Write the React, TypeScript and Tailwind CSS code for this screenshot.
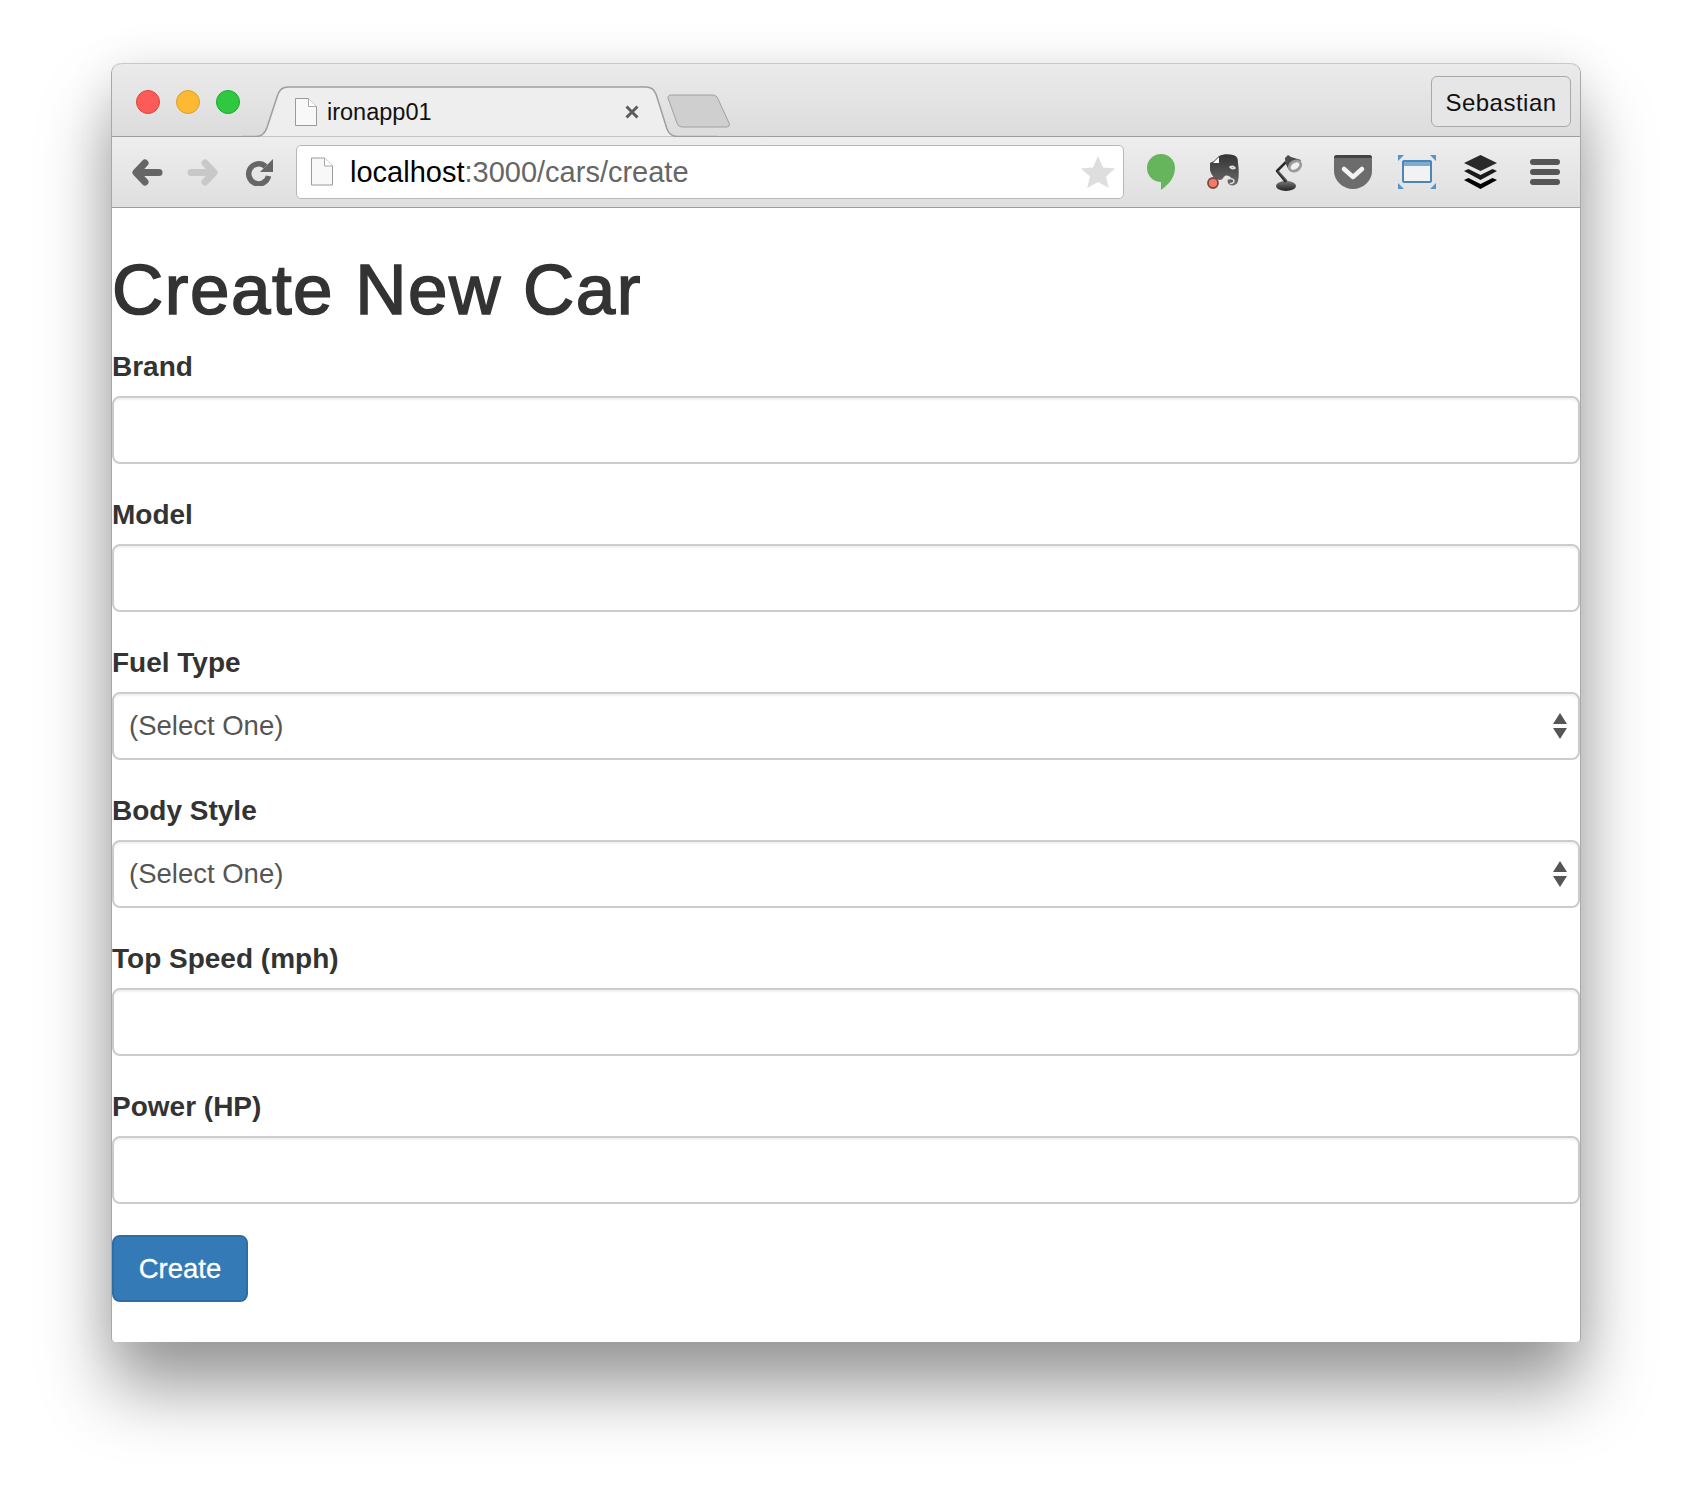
const sans = "font-['Liberation_Sans',Arial,sans-serif]";

function PageIcon({ className }: { className: string }) {
  return (
    <svg viewBox="0 0 22 28" className={className}>
      <path d="M.5.500h13l8 8v19H.5z" fill="#f8f8f8" stroke="#9a9a9a" />
      <path d="M13.500.500v8h8" fill="#fff" stroke="#a8a8a8" />
    </svg>
  );
}

function Arrow({ color, flip }: { color: string; flip?: boolean }) {
  return (
    <svg viewBox="0 0 31 27" className={`w-[31px] h-[27px] ${flip ? "-scale-x-100" : ""}`}>
      <path d="M13 4 4 13.500 13 23M5 13.500h22" fill="none" stroke={color} strokeWidth="7" strokeLinecap="round" strokeLinejoin="round" />
    </svg>
  );
}

function Hangouts() {
  return (
    <svg viewBox="0 0 28 36" className="w-[28px] h-[36px]">
      <path d="M14 0a14 14 0 0 1 14 14c0 10-7 17-14 22v-8A14 14 0 0 1 14 0z" fill="#66b45c" />
    </svg>
  );
}

function Evernote() {
  return (
    <svg viewBox="0 0 34 36" className="w-[34px] h-[36px] -ml-[4px]">
      <defs>
        <linearGradient id="ev" x1="0" y1="0" x2="0" y2="1">
          <stop offset="0" stopColor="#333" />
          <stop offset="1" stopColor="#6a6a6a" />
        </linearGradient>
      </defs>
      <path d="M8 7 13 2c4-2 10-2 14-1 4 1 5 3 5 8 1 7 1 13 0 18-1 5-8 6-10 2-1-3 0-5 3-5-1-2-4-3-6-2-2 1-2 4-5 4-5 0-9-5-10-10V9z" fill="url(#ev)" />
      <path d="M7 9 13 3v6z" fill="#fff" />
      <path d="M24 13c2-1 4-.500 5 1-2 1-4 .500-5-1zM22 25c3-1 6 0 6 2s-3 3-4 2" fill="none" stroke="#e0e0e0" strokeWidth="1.500" />
      <circle cx="7" cy="29" r="5" fill="#f4796a" stroke="#7a4a44" strokeWidth="1.800" />
    </svg>
  );
}

function Lamp() {
  return (
    <svg viewBox="0 0 28 37" className="w-[28px] h-[37px]">
      <defs>
        <linearGradient id="lb" x1="0" y1="0" x2="0" y2="1">
          <stop offset="0" stopColor="#777" />
          <stop offset="1" stopColor="#222" />
        </linearGradient>
      </defs>
      <ellipse cx="11" cy="32" rx="10" ry="5" fill="url(#lb)" />
      <path d="M11 28 2 17 11 8" fill="none" stroke="#2a2a2a" strokeWidth="2.500" strokeLinejoin="round" />
      <path d="M3 17 12 27" fill="none" stroke="#555" strokeWidth="1.500" />
      <path d="M10 4l3-3 3 2 10 3-9 12c-4-2-7-8-7-14z" fill="#4c4c4c" />
      <ellipse cx="20" cy="12" rx="7.500" ry="6" fill="#9a9a9a" transform="rotate(-35 20 12)" />
      <ellipse cx="20" cy="12" rx="5" ry="3" fill="#f0f0f0" transform="rotate(-35 20 12)" />
    </svg>
  );
}

function Pocket() {
  return (
    <svg viewBox="0 0 38 35" className="w-[38px] h-[35px]">
      <path d="M3 0h32a3 3 0 0 1 3 3v13c0 10-9 18-19 18S0 26 0 16V3a3 3 0 0 1 3-3z" fill="#6c6c6c" />
      <path d="M3 0h32a3 3 0 0 1 3 3H0a3 3 0 0 1 3-3z" fill="#444" />
      <path d="m10 14 9 8 9-8" fill="none" stroke="#f4f4f4" strokeWidth="4.500" strokeLinecap="round" strokeLinejoin="round" />
    </svg>
  );
}

function Screenshot() {
  return (
    <svg viewBox="0 0 38 34" className="w-[38px] h-[34px]">
      <path d="M0 0h6L0 6zM38 0h-6l6 6zM0 34h6l-6-6zM38 34h-6l6-6z" fill="#5b93c0" />
      <rect x="4" y="6" width="30" height="22" fill="#f2f2f2" />
      <rect x="4" y="6" width="30" height="5" fill="#7fabd0" />
      <rect x="5" y="6" width="28" height="21" rx="1" fill="none" stroke="#4a86b8" strokeWidth="2" />
    </svg>
  );
}

function Buffer() {
  return (
    <svg viewBox="0 0 33 34" className="w-[33px] h-[34px] -ml-[2px]">
      <path d="M16.500 0 33 8 16.500 16 0 8z" fill="#2a2a2a" />
      <path d="M0 16l4.500-2 12 6 12-6 4.500 2-16.500 9z" fill="#1a1a1a" />
      <path d="M0 25l4.500-2 12 6 12-6 4.500 2-16.500 9z" fill="#000" />
    </svg>
  );
}

function Hamburger() {
  return (
    <div className="w-[30px] flex flex-col gap-[4px]">
      <div className="h-[6px] rounded-[3px] bg-[#555]" />
      <div className="h-[6px] rounded-[3px] bg-[#555]" />
      <div className="h-[6px] rounded-[3px] bg-[#555]" />
    </div>
  );
}

function ExtSlot({ children }: { children: React.ReactNode }) {
  return <div className="w-[64px] flex justify-center">{children}</div>;
}

function Label({ children }: { children: string }) {
  return <label className="block h-[39px] mb-[10px] text-[28px] leading-[39px] font-bold text-[#333]">{children}</label>;
}

function TextField({ label }: { label: string }) {
  return (
    <div className="mb-[31px]">
      <Label>{label}</Label>
      <input type="text" className="block w-full h-[68px] rounded-[8px] border-2 border-[#ccc] bg-white shadow-[inset_0_2px_2px_rgba(0,0,0,0.06)]" />
    </div>
  );
}

function SelectField({ label }: { label: string }) {
  return (
    <div className="mb-[31px]">
      <Label>{label}</Label>
      <div className="flex items-center justify-between h-[68px] rounded-[8px] border-2 border-[#ccc] bg-white pl-[15px] pr-[11px] shadow-[inset_0_2px_2px_rgba(0,0,0,0.06)]">
        <span className="text-[27.500px] text-[#555]">(Select One)</span>
        <svg viewBox="0 0 14 26" className="w-[14px] h-[26px]">
          <path d="M7 0 14 11H0zM0 15h14L7 26z" fill="#555" />
        </svg>
      </div>
    </div>
  );
}

export default function App() {
  return (
    <div className={`min-h-[1502px] bg-white pt-[63px] px-[111px] ${sans}`}>
      <div className="w-[1470px] h-[1279px] rounded-t-[10px] rounded-b-[4px] bg-white flex flex-col shadow-[0_46px_70px_rgba(0,0,0,0.4),0_0_50px_rgba(0,0,0,0.07)] border-x border-[#a8a8a8]">
        {/* tab strip */}
        <div className="relative h-[74px] shrink-0 rounded-t-[10px] border-t border-[#c8c8c8] border-b border-b-[#9e9e9e] bg-gradient-to-b from-[#ebebeb] to-[#dcdcdc] flex justify-end items-start pt-[12px] pr-[9px]">
          <div className="absolute left-[24px] top-[26px] flex gap-[16px]">
            <span className="w-[24px] h-[24px] rounded-full bg-[#fc5b57] border border-[#e0443e]" />
            <span className="w-[24px] h-[24px] rounded-full bg-[#fdb834] border border-[#dea123]" />
            <span className="w-[24px] h-[24px] rounded-full bg-[#2fc840] border border-[#1aab29]" />
          </div>

          <svg viewBox="0 0 520 51" className="absolute left-[130px] top-[22px] w-[520px] h-[51px]" fill="none">
            <path d="M0 50.500h14c6 0 9-3 11-9L36 8c2-5 5-7 10-7h358c5 0 8 2 10 7l11 35c2 5 5 7.500 10 7.500h40" fill="#eeeeee" stroke="#9e9e9e" strokeWidth="1.500" />
            <path d="M426 12c0-2 1-3 3-3h41c3 0 5 1 6 4l11 24c1 3 0 4-3 4h-43c-3 0-5-1-6-4z" fill="#cfcfcf" stroke="#a0a0a0" strokeWidth="1" />
          </svg>

          <div className="absolute left-[183px] top-[34px] flex items-center w-[344px]">
            <PageIcon className="w-[22px] h-[28px] mr-[10px]" />
            <span className="text-[23.500px] leading-[28px] text-[#111] flex-1">ironapp01</span>
            <svg viewBox="0 0 14 14" className="w-[14px] h-[14px]">
              <path d="M1.500 1.500l11 11M12.500 1.500l-11 11" stroke="#5c5c5c" strokeWidth="3" />
            </svg>
          </div>

          <div className="relative w-[140px] h-[51px] rounded-[6px] border border-[#a9a9a9] bg-[#e6e6e6] text-center text-[24px] leading-[51px] tracking-[0.5px] text-[#111]">Sebastian</div>
        </div>

        {/* toolbar */}
        <div className="h-[71px] shrink-0 border-b border-[#9e9e9e] bg-gradient-to-b from-[#eeeeee] to-[#dfdfdf] flex items-center pl-[20px] pr-[3px]">
          <Arrow color="#666" />
          <div className="w-[24px]" />
          <Arrow color="#c8c8c8" flip />
          <div className="w-[28px]" />
          <svg viewBox="0 0 27 27" className="w-[27px] h-[27px]">
            <path d="M22.500 17a10 10 0 1 1-3-9.500" fill="none" stroke="#666" strokeWidth="5.500" />
            <path d="M27 0v13H14z" fill="#666" />
          </svg>
          <div className="ml-[23px] -mt-[1px] w-[828px] h-[54px] flex items-center rounded-[5px] border border-[#b8b8b8] bg-white pl-[14px] pr-[8px]">
            <PageIcon className="w-[22px] h-[29px] mr-[17px]" />
            <span className="flex-1 text-[29px] leading-[34px] mt-[1px] text-black">
              localhost<span className="text-[#666]">:3000/cars/create</span>
            </span>
            <svg viewBox="0 0 34 32" className="w-[34px] h-[32px]">
              <path d="M17 0l5 11.500 12 1-9 8 2.800 11.500L17 26l-10.800 6L9 20.500l-9-8 12-1z" fill="#dedede" />
            </svg>
          </div>
          <div className="flex-1 flex items-center justify-end">
            <ExtSlot><Hangouts /></ExtSlot>
            <ExtSlot><Evernote /></ExtSlot>
            <ExtSlot><Lamp /></ExtSlot>
            <ExtSlot><Pocket /></ExtSlot>
            <ExtSlot><Screenshot /></ExtSlot>
            <ExtSlot><Buffer /></ExtSlot>
            <ExtSlot><Hamburger /></ExtSlot>
          </div>
        </div>

        {/* page */}
        <div className="flex-1 text-[#333]">
          <h1 className="text-[71px] leading-[78px] font-normal text-[#333] tracking-[1.5px] [-webkit-text-stroke:1.6px_#333] mt-[43px] mb-[18px]">Create New Car</h1>
          <TextField label="Brand" />
          <TextField label="Model" />
          <SelectField label="Fuel Type" />
          <SelectField label="Body Style" />
          <TextField label="Top Speed (mph)" />
          <TextField label="Power (HP)" />
          <button className="w-[136px] h-[67px] rounded-[8px] border-2 border-[#2e6da4] bg-[#337ab7] text-[27.500px] text-white [-webkit-text-stroke:0.3px_#fff]">Create</button>
        </div>
      </div>
    </div>
  );
}
